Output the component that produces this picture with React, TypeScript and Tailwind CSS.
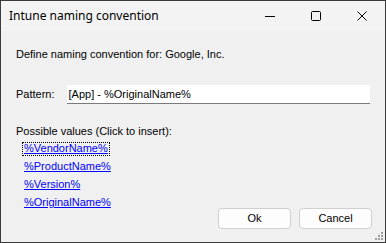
import React from "react";

const sans = { fontFamily: '"Liberation Sans", Arial, sans-serif' };

export default function App() {
  const links = ["%VendorName%", "%ProductName%", "%Version%", "%OriginalName%"];
  return (
    <div className="w-[386px] h-[243px] border border-[#3b3b3b] bg-[#f0f0f0] flex flex-col overflow-hidden">
      {/* Title bar */}
      <div className="h-[30px] bg-[#f3f3f3] flex items-center shrink-0">
        <span
          className="pl-[8px] text-[12px] text-black flex-1 leading-none"
          style={{ fontFamily: '"Noto Sans", "Open Sans", sans-serif' }}
        >
          Intune naming convention
        </span>
        <div className="flex items-center h-full">
          <div className="w-[46px] h-full flex items-center justify-center">
            <svg width="10" height="10" viewBox="0 0 10 10">
              <line x1="0" y1="5.5" x2="10" y2="5.5" stroke="#000" strokeWidth="1" />
            </svg>
          </div>
          <div className="w-[46px] h-full flex items-center justify-center">
            <svg width="10" height="10" viewBox="0 0 10 10">
              <rect x="0.5" y="0.5" width="9" height="9" rx="1" fill="none" stroke="#000" strokeWidth="1" />
            </svg>
          </div>
          <div className="w-[46px] h-full flex items-center justify-center">
            <svg width="10" height="10" viewBox="0 0 10 10">
              <path d="M0.5 0.5 L9.5 9.5 M9.5 0.5 L0.5 9.5" stroke="#000" strokeWidth="1" />
            </svg>
          </div>
        </div>
      </div>

      {/* Body */}
      <div className="flex-1 flex flex-col px-[15px] text-[11px] text-black relative" style={sans}>
        <div className="mt-[17px] leading-[13px]">Define naming convention for: Google, Inc.</div>

        <div className="mt-[24px] flex items-center">
          <span className="w-[51px] leading-[13px]">Pattern:</span>
          <div className="w-[306px] h-[19px] bg-white border-b border-[#7a7a7a] flex items-center pl-[2px]">
            [App] - %OriginalName%
          </div>
        </div>

        <div className="mt-[21px] leading-[13px]">Possible values (Click to insert):</div>
        <div className="flex flex-col items-start pl-[6px]">
          {links.map((l, i) => (
            <span
              key={l}
              className={
                "mt-[4px] h-[14px] px-[2px] leading-[13px] text-[#0000ff] underline underline-offset-[1px] " +
                (i === 0 ? "outline outline-1 outline-dotted outline-black -outline-offset-1" : "")
              }
            >
              {l}
            </span>
          ))}
        </div>

        <div className="absolute right-[13px] bottom-[13px] flex gap-[8px]">
          <button className="w-[73px] h-[21px] bg-[#fdfdfd] border border-[#d0d0d0] rounded-[4px] text-[11px] leading-none" style={sans}>
            Ok
          </button>
          <button className="w-[73px] h-[21px] bg-[#fdfdfd] border border-[#d0d0d0] rounded-[4px] text-[11px] leading-none" style={sans}>
            Cancel
          </button>
        </div>

        <svg className="absolute right-[2px] bottom-[2px]" width="8" height="8" viewBox="0 0 8 8">
          <rect x="6" y="0" width="2" height="2" fill="#a0a0a0" />
          <rect x="3" y="3" width="2" height="2" fill="#a0a0a0" />
          <rect x="6" y="3" width="2" height="2" fill="#a0a0a0" />
          <rect x="0" y="6" width="2" height="2" fill="#a0a0a0" />
          <rect x="3" y="6" width="2" height="2" fill="#a0a0a0" />
          <rect x="6" y="6" width="2" height="2" fill="#a0a0a0" />
        </svg>
      </div>
    </div>
  );
}
